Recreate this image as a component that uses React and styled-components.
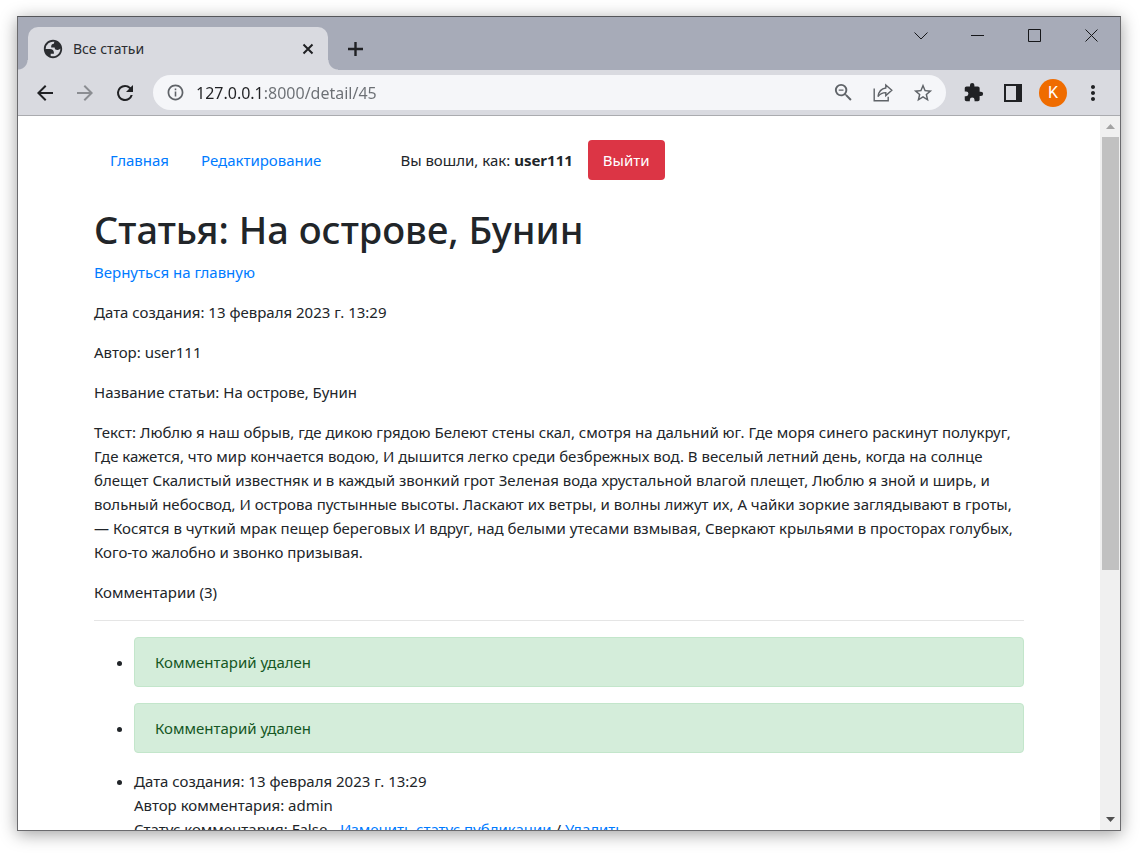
import React from "react";
import styled, { createGlobalStyle } from "styled-components";

const Global = createGlobalStyle`
  *, *::before, *::after { box-sizing: border-box; }
  body { margin: 0; background: #ffffff; }
  button, input { font: inherit; }
`;

const Desktop = styled.div`
  height: 100vh;
  padding: 16px 21px 22px 17px;
  overflow: hidden;
  font-family: "Noto Sans", "Open Sans", sans-serif;
  font-size: 15px;
  line-height: 24px;
  color: #212529;
`;

const BrowserWindow = styled.div`
  display: flex;
  flex-direction: column;
  height: 100%;
  overflow: hidden;
  border: 1px solid #6b6b6e;
  border-top-color: #55565a;
  box-shadow: 0 3px 16px rgba(0, 0, 0, 0.38);
`;

const TabStrip = styled.header`
  display: flex;
  align-items: flex-end;
  height: 53px;
  padding-left: 10px;
  background: #a7abb8;
`;

const Tab = styled.div`
  position: relative;
  display: flex;
  align-items: center;
  gap: 10px;
  width: 300px;
  height: 43px;
  padding: 0 10px 0 15px;
  border-radius: 10px 10px 0 0;
  background: #d9dae0;
  font-size: 14px;
  color: #2b2d31;

  &::before,
  &::after {
    content: "";
    position: absolute;
    bottom: 0;
    width: 10px;
    height: 10px;
  }
  &::before {
    right: 100%;
    background: radial-gradient(circle at 0 0, transparent 9px, #d9dae0 10px);
  }
  &::after {
    left: 100%;
    background: radial-gradient(circle at 100% 0, transparent 9px, #d9dae0 10px);
  }
`;

const TabTitle = styled.span`
  flex: 1;
`;

const IconButton = styled.button`
  display: flex;
  align-items: center;
  justify-content: center;
  flex: none;
  width: ${(p) => p.$width || 40}px;
  height: ${(p) => p.$height || 36}px;
  padding: 0;
  border: 0;
  background: none;
  color: ${(p) => p.$color || "#202124"};
`;

const NewTab = styled(IconButton)`
  margin: 0 auto 3px 7px;
`;

const WindowControls = styled.div`
  display: flex;
  align-self: flex-start;
`;

const Toolbar = styled.div`
  display: flex;
  align-items: center;
  flex: none;
  height: 46px;
  padding: 0 7px;
  border-bottom: 1px solid #aaabaf;
  background: #d9dae0;
`;

const AddressBar = styled.label`
  display: flex;
  align-items: center;
  flex: 1;
  height: 35px;
  margin: 0 7px 0 8px;
  padding: 0 3px 0 13px;
  border-radius: 18px;
  background: #f5f6f9;
  color: #5f6368;
`;

const AddressInput = styled.input`
  flex: 1;
  min-width: 0;
  height: 28px;
  margin-left: 11px;
  padding: 0;
  border: 0;
  outline: 0;
  font-size: 16px;
  color: transparent;
  background: linear-gradient(90deg, #202124 68px, #6b6f74 68px);
  background-clip: text;
`;

const Avatar = styled.span`
  display: flex;
  align-items: center;
  justify-content: center;
  width: 28px;
  height: 28px;
  border-radius: 50%;
  background: #ef6c00;
  color: #ffffff;
  font-family: Roboto, sans-serif;
  font-size: 16px;
`;

const Viewport = styled.div`
  display: flex;
  flex: 1;
  min-height: 0;
  background: #ffffff;
`;

const Page = styled.div`
  flex: 1;
  min-width: 0;
  overflow: hidden;
`;

const Container = styled.main`
  max-width: 960px;
  margin: 0 auto;
  padding: 24px 15px;
`;

const ScrollBar = styled.div`
  display: flex;
  flex-direction: column;
  flex: none;
  width: 20px;
  padding: 0 1px 0 2px;
  background: #f0f0f0;
`;

const ScrollArrow = styled.span`
  display: flex;
  align-items: center;
  justify-content: center;
  height: 21px;
`;

const ScrollTrack = styled.div`
  flex: 1;
`;

const ScrollThumb = styled.div`
  height: 64.5%;
  background: #c1c1c1;
`;

const Nav = styled.nav`
  display: flex;
  align-items: center;
  padding-left: 16px;
  margin-bottom: 25px;
`;

const Link = styled.a`
  color: #007bff;
  text-decoration: none;
`;

const NavLink = styled(Link)`
  margin-right: 32px;
`;

const SignedIn = styled.span`
  margin: 0 15px 0 47px;
`;

const LogoutButton = styled.button`
  height: 40px;
  padding: 0 15px;
  border: 0;
  border-radius: 4px;
  background: #dc3545;
  color: #ffffff;
`;

const Title = styled.h1`
  margin: 0 0 7px;
  font-size: 38px;
  font-weight: 500;
  line-height: 48px;
`;

const Paragraph = styled.p`
  margin: 0 0 16px;
`;

const Divider = styled.hr`
  margin: 16px 0;
  border: 0;
  border-top: 1px solid #e5e5e5;
`;

const CommentList = styled.ul`
  margin: 0;
  padding-left: 40px;
`;

const Alert = styled.div`
  margin-bottom: 16px;
  padding: 12px 20px;
  border: 1px solid #c3e6cb;
  border-radius: 4px;
  background: #d4edda;
  color: #155724;
`;

const Icon = ({ size = 24, d }) => (
  <svg width={size} height={size} viewBox="0 0 24 24" fill="currentColor" fillRule="evenodd" aria-hidden="true">
    <path d={d} />
  </svg>
);

const GLOBE = "M12 1C5.92 1 1 5.92 1 12s4.92 11 11 11 11-4.92 11-11S18.08 1 12 1zM3.2 12h4.84c3.75.02 5.41 1.9 5 5.64H9.24v2.72a8.8 8.8 0 0 0 11.54-8.9c-.73 1.1-1.82 1.64-3.28 1.64-2.35 0-3.53-1-3.53-3.03H9.85c-.3-3 .75-4.5 3.16-4.5 0-1.07.36-1.76.89-2.17A8.8 8.8 0 0 0 3.2 12z";
const BACK = "M20 11H7.83l5.59-5.59L12 4l-8 8 8 8 1.41-1.41L7.83 13H20v-2z";
const FORWARD = "M12 4l-1.41 1.41L16.17 11H4v2h12.17l-5.58 5.59L12 20l8-8z";
const RELOAD = "M17.65 6.35A7.96 7.96 0 0 0 12 4a8 8 0 1 0 7.73 10h-2.08A6 6 0 1 1 12 6c1.66 0 3.14.69 4.22 1.78L13 11h7V4l-2.35 2.35z";
const INFO = "M11 6.8h2v2.4h-2zm0 4h2v6.4h-2zM12 2C6.48 2 2 6.48 2 12s4.48 10 10 10 10-4.48 10-10S17.52 2 12 2zm0 17.8c-4.3 0-7.8-3.5-7.8-7.8S7.7 4.2 12 4.2s7.8 3.5 7.8 7.8-3.5 7.8-7.8 7.8z";
const ZOOM_OUT = "M15.5 14h-.79l-.28-.27A6.47 6.47 0 0 0 16 9.5 6.5 6.5 0 1 0 9.5 16c1.61 0 3.09-.59 4.23-1.57l.27.28v.79l5 4.99L20.49 19l-4.99-5zm-6 0a4.5 4.5 0 1 1 0-9 4.5 4.5 0 0 1 0 9zM7 8.8h5v1.4H7z";
const STAR = "M22 9.24l-7.19-.62L12 2 9.19 8.63 2 9.24l5.46 4.73L5.82 21 12 17.27 18.18 21l-1.63-7.03L22 9.24zM12 15.4l-3.76 2.27 1-4.28-3.32-2.88 4.38-.38L12 6.1l1.71 4.04 4.38.38-3.32 2.88 1 4.28L12 15.4z";
const PUZZLE = "M20.5 11H19V7c0-1.1-.9-2-2-2h-4V3.5a2.5 2.5 0 0 0-5 0V5H4c-1.1 0-1.99.9-1.99 2v3.8H3.5a2.7 2.7 0 0 1 0 5.4H2V20c0 1.1.9 2 2 2h3.8v-1.5a2.7 2.7 0 0 1 5.4 0V22H17c1.1 0 2-.9 2-2v-4h1.5a2.5 2.5 0 0 0 0-5z";
const MORE = "M12 8c1.1 0 2-.9 2-2s-.9-2-2-2-2 .9-2 2 .9 2 2 2zm0 2c-1.1 0-2 .9-2 2s.9 2 2 2 2-.9 2-2-.9-2-2-2zm0 6c-1.1 0-2 .9-2 2s.9 2 2 2 2-.9 2-2-.9-2-2-2z";

const CaptionIcon = ({ d }) => (
  <svg width="14" height="14" viewBox="0 0 14 14" fill="none" stroke="#16171a" aria-hidden="true">
    <path d={d} />
  </svg>
);

const captions = [
  ["Поиск вкладок", "M0.5 3.5l6.5 6.5 6.5-6.5"],
  ["Свернуть", "M0 6.5h13"],
  ["Развернуть", "M0.5 0.5h12v12h-12z"],
  ["Закрыть", "M0.5 0.5l12 12M12.5 0.5l-12 12"],
];

export default function App() {
  return (
    <>
      <Global />
      <Desktop>
        <BrowserWindow>
          <TabStrip>
            <Tab>
              <Icon size={20} d={GLOBE} />
              <TabTitle>Все статьи</TabTitle>
              <IconButton $width={20} $height={20} aria-label="Закрыть вкладку">
                <svg width="12" height="12" viewBox="0 0 12 12" stroke="currentColor" strokeWidth="2" aria-hidden="true">
                  <path d="M1.5 1.5l9 9M10.5 1.5l-9 9" />
                </svg>
              </IconButton>
            </Tab>
            <NewTab aria-label="Новая вкладка">
              <svg width="16" height="16" viewBox="0 0 16 16" stroke="currentColor" strokeWidth="2.4" aria-hidden="true">
                <path d="M1 8h15M8.5 1v14" />
              </svg>
            </NewTab>
            <WindowControls>
              {captions.map(([label, d]) => (
                <IconButton key={label} $width={57} $height={38} aria-label={label}>
                  <CaptionIcon d={d} />
                </IconButton>
              ))}
            </WindowControls>
          </TabStrip>

          <Toolbar>
            <IconButton aria-label="Назад"><Icon d={BACK} /></IconButton>
            <IconButton aria-label="Вперёд" $color="#8b8d92"><Icon d={FORWARD} /></IconButton>
            <IconButton aria-label="Обновить"><Icon d={RELOAD} /></IconButton>
            <AddressBar>
              <Icon size={19} d={INFO} />
              <AddressInput aria-label="Адрес" defaultValue="127.0.0.1:8000/detail/45" />
              <IconButton $color="#5f6368" aria-label="Масштаб"><Icon size={23} d={ZOOM_OUT} /></IconButton>
              <IconButton $color="#5f6368" aria-label="Поделиться">
                <svg width="20" height="20" viewBox="0 0 20 20" fill="none" stroke="currentColor" strokeWidth="1.4" aria-hidden="true">
                  <path d="M1.2 5.5v12.3h14v-4" />
                  <path d="M12.8 2l6 5.3-6 5.3V9.6C9.5 9.6 7 10.8 5 13.6 5.6 9 8 5.6 12.8 5z" />
                </svg>
              </IconButton>
              <IconButton $color="#5f6368" aria-label="Добавить в закладки"><Icon size={22} d={STAR} /></IconButton>
            </AddressBar>
            <IconButton aria-label="Расширения"><Icon size={21} d={PUZZLE} /></IconButton>
            <IconButton aria-label="Боковая панель">
              <svg width="18" height="18" viewBox="0 0 18 18" aria-hidden="true">
                <path fill="currentColor" fillRule="evenodd" d="M0 0h18v18H0zM2 2v14h10V2z" />
              </svg>
            </IconButton>
            <IconButton aria-label="Профиль"><Avatar>K</Avatar></IconButton>
            <IconButton aria-label="Меню"><Icon size={24} d={MORE} /></IconButton>
          </Toolbar>

          <Viewport>
            <Page>
              <Container>
                <Nav>
                  <NavLink href="#home">Главная</NavLink>
                  <NavLink href="#edit">Редактирование</NavLink>
                  <SignedIn>Вы вошли, как: <b>user111</b></SignedIn>
                  <LogoutButton>Выйти</LogoutButton>
                </Nav>
                <Title>Статья: На острове, Бунин</Title>
                <Paragraph><Link href="#home">Вернуться на главную</Link></Paragraph>
                <Paragraph>Дата создания: 13 февраля 2023 г. 13:29</Paragraph>
                <Paragraph>Автор: user111</Paragraph>
                <Paragraph>Название статьи: На острове, Бунин</Paragraph>
                <Paragraph>
                  Текст: Люблю я наш обрыв, где дикою грядою Белеют стены скал, смотря на дальний юг. Где моря синего раскинут полукруг, Где кажется, что мир кончается водою, И дышится легко среди безбрежных вод. В веселый летний день, когда на солнце блещет Скалистый известняк и в каждый звонкий грот Зеленая вода хрустальной влагой плещет, Люблю я зной и ширь, и вольный небосвод, И острова пустынные высоты. Ласкают их ветры, и волны лижут их, А чайки зоркие заглядывают в гроты, — Косятся в чуткий мрак пещер береговых И вдруг, над белыми утесами взмывая, Сверкают крыльями в просторах голубых, Кого-то жалобно и звонко призывая.
                </Paragraph>
                <div>Комментарии (3)</div>
                <Divider />
                <CommentList>
                  <li><Alert>Комментарий удален</Alert></li>
                  <li><Alert>Комментарий удален</Alert></li>
                  <li>
                    <div>Дата создания: 13 февраля 2023 г. 13:29</div>
                    <div>Автор комментария: admin</div>
                    <div>
                      Статус комментария: False - <Link href="#status">Изменить статус публикации</Link> / <Link href="#delete">Удалить</Link>
                    </div>
                  </li>
                </CommentList>
              </Container>
            </Page>
            <ScrollBar aria-hidden="true">
              <ScrollArrow>
                <svg width="9" height="5" viewBox="0 0 9 5"><path d="M0 5l4.5-5L9 5z" fill="#a3a3a3" /></svg>
              </ScrollArrow>
              <ScrollTrack><ScrollThumb /></ScrollTrack>
              <ScrollArrow>
                <svg width="9" height="5" viewBox="0 0 9 5"><path d="M0 0l4.5 5L9 0z" fill="#505050" /></svg>
              </ScrollArrow>
            </ScrollBar>
          </Viewport>
        </BrowserWindow>
      </Desktop>
    </>
  );
}
